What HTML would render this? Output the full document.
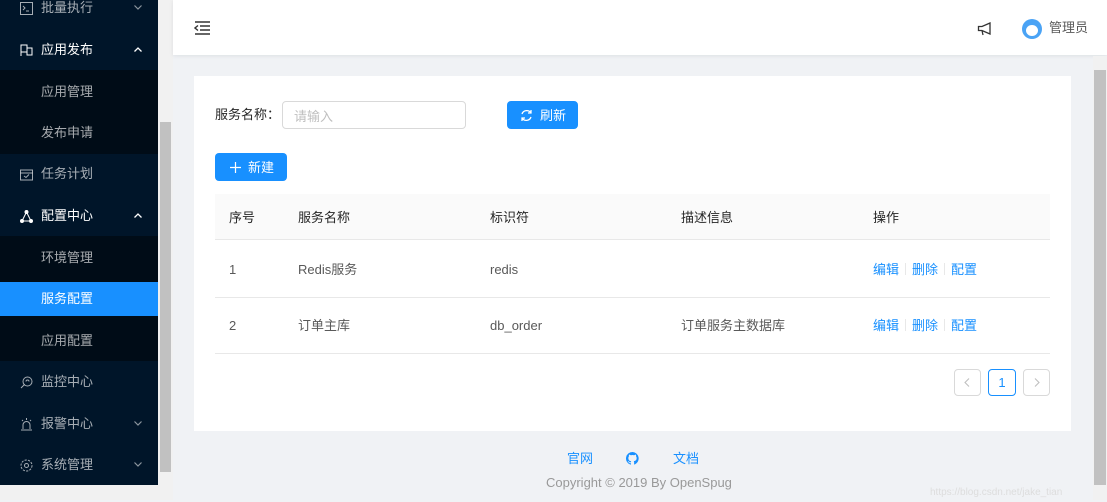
<!DOCTYPE html>
<html><head><meta charset="utf-8"><style>
*{margin:0;padding:0;box-sizing:border-box}
body{width:1107px;height:500px;overflow:hidden;position:relative;background:#f0f2f5;font-family:"Liberation Sans","Noto Sans CJK SC",sans-serif;font-size:13px;color:#595959;line-height:18px}
.a{position:absolute;line-height:18px}
.side{left:0;top:0;width:158px;height:485px;background:#001529}
.sub{left:0;width:158px;background:#000c17}
.mi{position:absolute;left:41px;color:rgba(255,255,255,.65);font-size:13px;line-height:16px}
.mi.w{color:#fff}
.ic{position:absolute;left:20px;width:13px;height:13px}
.car{position:absolute;left:134px;width:8px;height:5px}
.th{top:209px;color:#262626}
.td{color:#595959}
.lk{color:#1890ff}
.sep{display:inline-block;width:1px;height:12px;background:#e8e8e8;margin:0 6px;vertical-align:-1px}
</style></head><body>
<div class="a side"></div>
<div class="a sub" style="top:70px;height:84px"></div>
<div class="a sub" style="top:236px;height:125px"></div>
<div class="a" style="left:0;top:282px;width:158px;height:34px;background:#1890ff"></div>

<svg class="ic" style="top:2px" viewBox="0 0 13 13" fill="none" stroke="rgba(255,255,255,.65)"><rect x=".5" y=".5" width="12" height="12"/><path d="M3 4l2 2-2 2M6 9h3"/></svg>
<div class="mi" style="top:0">批量执行</div><svg class="car" style="top:5px" viewBox="0 0 8 5" fill="none" stroke="rgba(255,255,255,.55)" stroke-width="1.2"><path d="M.5.5L4 4 7.5.5"/></svg>
<svg class="ic" style="top:44px" viewBox="0 0 13 13" fill="none" stroke="#fff"><path d="M1 12V1h6v3h5v7H7V4M1 8h6"/></svg>
<div class="mi w" style="top:42px">应用发布</div><svg class="car" style="top:47px" viewBox="0 0 8 5" fill="none" stroke="#fff" stroke-width="1.3"><path d="M.5 4.5L4 1l3.5 3.5"/></svg>
<div class="mi" style="top:84px">应用管理</div>
<div class="mi" style="top:125px">发布申请</div>
<svg class="ic" style="top:168px" viewBox="0 0 13 13" fill="none" stroke="rgba(255,255,255,.65)"><rect x=".5" y="2" width="12" height="10"/><path d="M.5 5h12M4 8l2 1.5 3-3"/></svg>
<div class="mi" style="top:166px">任务计划</div>
<svg class="ic" style="top:210px" viewBox="0 0 13 13" fill="none" stroke="#fff"><path d="M6.5 2L2 11M6.5 2l4.5 9M2 11h9"/><circle cx="6.5" cy="2" r="1.5" fill="#fff"/><circle cx="2" cy="11" r="1.5" fill="#fff"/><circle cx="11" cy="11" r="1.5" fill="#fff"/></svg>
<div class="mi w" style="top:208px">配置中心</div><svg class="car" style="top:213px" viewBox="0 0 8 5" fill="none" stroke="#fff" stroke-width="1.3"><path d="M.5 4.5L4 1l3.5 3.5"/></svg>
<div class="mi" style="top:250px">环境管理</div>
<div class="mi w" style="top:291px">服务配置</div>
<div class="mi" style="top:333px">应用配置</div>
<svg class="ic" style="top:376px" viewBox="0 0 13 13" fill="none" stroke="rgba(255,255,255,.65)"><circle cx="7.5" cy="5.5" r="4.5"/><path d="M4.5 8.5L1 12M6 5.5a1.5 1.5 0 013 0"/></svg>
<div class="mi" style="top:374px">监控中心</div>
<svg class="ic" style="top:418px" viewBox="0 0 13 13" fill="none" stroke="rgba(255,255,255,.65)"><path d="M3 11V7a3.5 3.5 0 017 0v4M1 12h11M2 2l1 1M11 2l-1 1M6.5 0v2"/></svg>
<div class="mi" style="top:416px">报警中心</div><svg class="car" style="top:421px" viewBox="0 0 8 5" fill="none" stroke="rgba(255,255,255,.55)" stroke-width="1.2"><path d="M.5.5L4 4 7.5.5"/></svg>
<svg class="ic" style="top:459px" viewBox="0 0 13 13" fill="none" stroke="rgba(255,255,255,.65)"><circle cx="6.5" cy="6.5" r="2"/><circle cx="6.5" cy="6.5" r="5.5" stroke-dasharray="2.2 1.2"/></svg>
<div class="mi" style="top:457px">系统管理</div><svg class="car" style="top:462px" viewBox="0 0 8 5" fill="none" stroke="rgba(255,255,255,.55)" stroke-width="1.2"><path d="M.5.5L4 4 7.5.5"/></svg>

<div class="a" style="left:158px;top:0;width:15px;height:485px;background:#f1f1f1"></div>
<div class="a" style="left:160px;top:122px;width:11px;height:350px;background:#c1c1c1"></div>
<div class="a" style="left:0;top:485px;width:173px;height:15px;background:#f1f1f1"></div>

<div class="a" style="left:173px;top:0;width:934px;height:55px;background:#fff;box-shadow:0 1px 4px rgba(0,21,41,.08)"></div>
<svg class="a" style="left:194px;top:21px" width="17" height="14" viewBox="0 0 17 14" fill="none" stroke="#333" stroke-width="1.4"><path d="M1 1h15M6 5h10M6 9h10M1 13h15M4 4.5L1 7l3 2.5"/></svg>
<svg class="a" style="left:977px;top:22px" width="15" height="14" viewBox="0 0 15 14" fill="none" stroke="#333" stroke-width="1.3"><path d="M13 1L5 4.5H1.5v4H5L13 12zM5 8.5L6 13"/></svg>
<div class="a" style="left:1022px;top:19px;width:20px;height:20px;border-radius:50%;background:#4aa3f5"></div>
<div class="a" style="left:1026px;top:25px;width:12px;height:11px;border-radius:50%;background:#fff"></div>
<div class="a" style="left:1049px;top:19px;font-size:13px;color:#595959">管理员</div>

<div class="a" style="left:1093px;top:56px;width:14px;height:444px;background:#f1f1f1"></div>
<div class="a" style="left:1094px;top:70px;width:12px;height:415px;background:#c1c1c1"></div>

<div class="a" style="left:194px;top:76px;width:877px;height:355px;background:#fff"></div>
<div class="a" style="left:215px;top:106px;color:#262626">服务名称：</div>
<div class="a" style="left:282px;top:101px;width:184px;height:28px;border:1px solid #d9d9d9;border-radius:4px;padding:6px 11px 0;color:#bfbfbf">请输入</div>
<div class="a" style="left:507px;top:101px;width:71px;height:28px;background:#1890ff;border-radius:4px;color:#fff;padding:6px 0 0 33px">刷新</div>
<svg class="a" style="left:520px;top:109px" width="13" height="13" viewBox="0 0 13 13" fill="none" stroke="#fff" stroke-width="1.3"><path d="M11 4A5 5 0 002 5M2 9a5 5 0 009-1M11 1v3H8M2 12V9h3"/></svg>
<div class="a" style="left:215px;top:153px;width:72px;height:28px;background:#1890ff;border-radius:4px;color:#fff;padding:6px 0 0 33px">新建</div>
<svg class="a" style="left:230px;top:162px" width="11" height="11" viewBox="0 0 11 11" stroke="#fff" stroke-width="1.2"><path d="M5.5 0v11M0 5.5h11"/></svg>

<div class="a" style="left:215px;top:194px;width:835px;height:46px;background:#fafafa;border-bottom:1px solid #e8e8e8"></div>
<div class="a" style="left:215px;top:297px;width:835px;height:1px;background:#e8e8e8"></div>
<div class="a" style="left:215px;top:353px;width:835px;height:1px;background:#e8e8e8"></div>
<div class="a th" style="left:229px">序号</div>
<div class="a th" style="left:298px">服务名称</div>
<div class="a th" style="left:490px">标识符</div>
<div class="a th" style="left:681px">描述信息</div>
<div class="a th" style="left:873px">操作</div>
<div class="a td" style="left:229px;top:261px">1</div>
<div class="a td" style="left:298px;top:261px">Redis服务</div>
<div class="a td" style="left:490px;top:261px">redis</div>
<div class="a" style="left:873px;top:261px"><span class="lk">编辑</span><span class="sep"></span><span class="lk">删除</span><span class="sep"></span><span class="lk">配置</span></div>
<div class="a td" style="left:229px;top:317px">2</div>
<div class="a td" style="left:298px;top:317px">订单主库</div>
<div class="a td" style="left:490px;top:317px">db_order</div>
<div class="a td" style="left:681px;top:317px">订单服务主数据库</div>
<div class="a" style="left:873px;top:317px"><span class="lk">编辑</span><span class="sep"></span><span class="lk">删除</span><span class="sep"></span><span class="lk">配置</span></div>

<div class="a" style="left:954px;top:369px;width:27px;height:27px;border:1px solid #d9d9d9;border-radius:4px"></div>
<svg class="a" style="left:964px;top:378px" width="6" height="9" viewBox="0 0 6 9" fill="none" stroke="#bfbfbf" stroke-width="1.1"><path d="M5 .5L1 4.5 5 8.5"/></svg>
<div class="a" style="left:988px;top:369px;width:28px;height:27px;border:1px solid #1890ff;border-radius:4px;text-align:center;line-height:25px;color:#1890ff">1</div>
<div class="a" style="left:1023px;top:369px;width:27px;height:27px;border:1px solid #d9d9d9;border-radius:4px"></div>
<svg class="a" style="left:1034px;top:378px" width="6" height="9" viewBox="0 0 6 9" fill="none" stroke="#bfbfbf" stroke-width="1.1"><path d="M1 .5l4 4-4 4"/></svg>

<div class="a lk" style="left:567px;top:450px">官网</div>
<svg class="a" style="left:626px;top:452px" width="13" height="13" viewBox="0 0 16 16"><path fill="#1890ff" d="M8 0a8 8 0 00-2.5 15.6c.4 0 .5-.2.5-.4v-1.5c-2.2.5-2.7-1-2.7-1-.4-.9-.9-1.2-.9-1.2-.7-.5.1-.5.1-.5.8.1 1.2.8 1.2.8.7 1.3 1.9.9 2.3.7.1-.5.3-.9.5-1.1-1.8-.2-3.6-.9-3.6-4 0-.9.3-1.6.8-2.1-.1-.2-.4-1 .1-2.1 0 0 .7-.2 2.2.8a7.5 7.5 0 014 0c1.5-1 2.2-.8 2.2-.8.4 1.1.2 1.9.1 2.1.5.6.8 1.300.8 2.1 0 3.1-1.9 3.7-3.6 3.9.3.3.5.8.5 1.5v2.2c0 .2.1.5.6.4A8 8 0 008 0z"/></svg>
<div class="a lk" style="left:673px;top:450px">文档</div>
<div class="a" style="left:546px;top:474px;color:#999">Copyright © 2019 By OpenSpug</div>
<div class="a" style="left:930px;top:484px;color:#ddd;font-size:10px">https://blog.csdn.net/jake_tian</div>
</body></html>
